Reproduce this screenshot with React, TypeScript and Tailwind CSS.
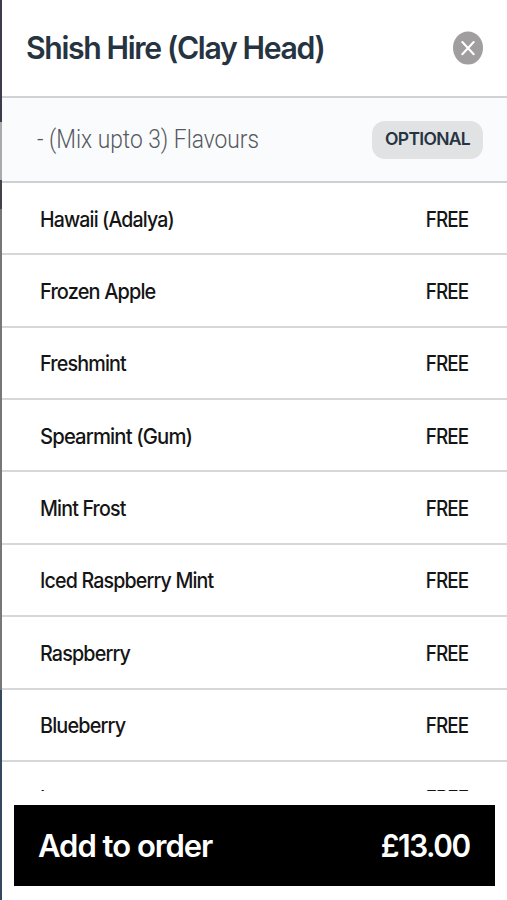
import clsx from "clsx"

const flavours = [
  { name: "Hawaii (Adalya)", price: "FREE", fit: "scale-x-[0.93]" },
  { name: "Frozen Apple", price: "FREE", fit: "scale-x-[0.95]" },
  { name: "Freshmint", price: "FREE", fit: "scale-x-[0.94]" },
  { name: "Spearmint (Gum)", price: "FREE", fit: "scale-x-[0.965]" },
  { name: "Mint Frost", price: "FREE", fit: "scale-x-[0.935]" },
  { name: "Iced Raspberry Mint", price: "FREE", fit: "scale-x-[0.935]" },
  { name: "Raspberry", price: "FREE", fit: "scale-x-[0.94]" },
  { name: "Blueberry", price: "FREE", fit: "scale-x-[0.945]" },
  { name: "Lemon", price: "FREE", fit: "scale-x-[0.94]" },
]

function CloseIcon() {
  return (
    <svg className="h-[34px] w-[30px]" viewBox="0 0 30 34" fill="none">
      <ellipse cx="15" cy="17" rx="15" ry="16.5" fill="#a09e9e" />
      <path d="M9.3 11 20.7 23.2M20.7 11 9.3 23.2" stroke="#fff" strokeWidth="2.1" strokeLinecap="round" />
    </svg>
  )
}

export default function App() {
  return (
    <div className="flex h-[900px] w-[507px] overflow-hidden bg-white font-['Inter',sans-serif]">
      {/* page behind the modal */}
      <div className="flex w-[1.5px] shrink-0 flex-col">
        <div className="h-[122px] bg-[#3c3c4a]" />
        <div className="h-[58px] bg-[#aaaaac]" />
        <div className="h-[29px] bg-[#424248]" />
        <div className="h-[481px] bg-[#77777a]" />
        <div className="flex-1 bg-[#344860]" />
      </div>

      <div className="flex min-w-0 flex-1 flex-col">
        <header className="flex h-[98px] shrink-0 items-center justify-between border-b-2 border-[#d0d2d4] pr-6 pl-6">
          <h1 className="origin-left scale-x-[0.975] pt-px text-[31px] font-semibold tracking-[-1.4px] whitespace-nowrap text-[#263442]">
            Shish Hire (Clay Head)
          </h1>
          <button type="button" aria-label="Close">
            <CloseIcon />
          </button>
        </header>

        <div className="flex h-[85px] shrink-0 items-center justify-between border-b-2 border-[#cdd0d3] bg-[#f9fbfd] pr-6 pl-[35px]">
          <h2 className="origin-left scale-x-[0.91] pt-px font-['Roboto',sans-serif] text-[25px] font-light whitespace-nowrap text-[#55585c]">
            - (Mix upto 3) Flavours
          </h2>
          <span className="flex h-[38px] w-[111px] items-center justify-center rounded-[13px] bg-[#e1e2e3] text-[17.5px] font-semibold tracking-[-0.7px] text-[#263442]">
            OPTIONAL
          </span>
        </div>

        <ul className="h-[607.5px] shrink-0 overflow-hidden">
          {flavours.map((item) => (
            <li
              key={item.name}
              className="flex h-[72.36px] items-center justify-between border-b-2 border-[#d5d7d9] pt-[2.5px] pr-[39px] pl-[38px] text-[21px] font-medium text-[#151515]"
            >
              <span className={clsx("origin-left tracking-[-0.9px] whitespace-nowrap", item.fit)}>{item.name}</span>
              <span className="origin-right scale-x-[0.9] tracking-[-1px]">{item.price}</span>
            </li>
          ))}
        </ul>

        <button
          type="button"
          className="mt-[14.5px] mr-3 ml-[12.5px] flex h-[81px] shrink-0 items-center justify-between bg-black pt-0.5 pr-[25px] pl-6 text-[31px] font-semibold text-white"
        >
          <span className="tracking-[-1px]">Add to order</span>
          <span className="origin-right scale-x-[0.96] tracking-[-1.5px]">£13.00</span>
        </button>
      </div>
    </div>
  )
}
